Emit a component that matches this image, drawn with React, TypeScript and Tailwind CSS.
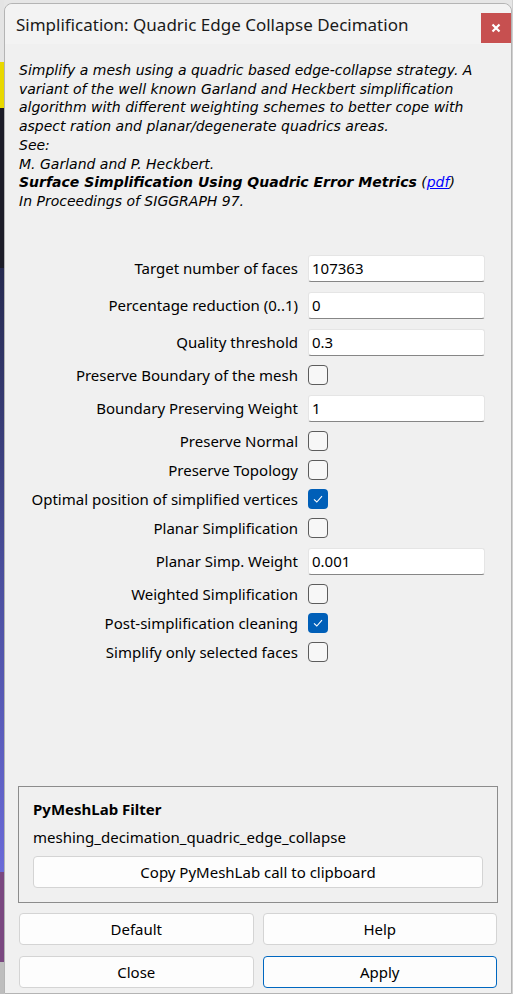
import React from "react";

const ui = { fontFamily: '"Noto Sans", "Open Sans", sans-serif' };
const desc = { fontFamily: '"DejaVu Sans", Verdana, sans-serif' };

function Check({ checked }: { checked?: boolean }) {
  return checked ? (
    <div className="w-[20px] h-[20px] rounded-[4px] bg-[#005fb8] flex items-center justify-center">
      <svg width="12" height="12" viewBox="0 0 12 12">
        <path d="M2 6.3 L4.8 9 L10 3.2" fill="none" stroke="white" strokeWidth="1.1" />
      </svg>
    </div>
  ) : (
    <div className="w-[20px] h-[20px] rounded-[4px] border border-[#5c5c5c] bg-[#f7f7f7]" />
  );
}

type Row = { label: string; value?: string; checked?: boolean; kind: "input" | "check" };

const rows: Row[] = [
  { label: "Target number of faces", value: "107363", kind: "input" },
  { label: "Percentage reduction (0..1)", value: "0", kind: "input" },
  { label: "Quality threshold", value: "0.3", kind: "input" },
  { label: "Preserve Boundary of the mesh", kind: "check" },
  { label: "Boundary Preserving Weight", value: "1", kind: "input" },
  { label: "Preserve Normal", kind: "check" },
  { label: "Preserve Topology", kind: "check" },
  { label: "Optimal position of simplified vertices", kind: "check", checked: true },
  { label: "Planar Simplification", kind: "check" },
  { label: "Planar Simp. Weight", value: "0.001", kind: "input" },
  { label: "Weighted Simplification", kind: "check" },
  { label: "Post-simplification cleaning", kind: "check", checked: true },
  { label: "Simplify only selected faces", kind: "check" },
];

function Btn({ children, primary }: { children: React.ReactNode; primary?: boolean }) {
  return (
    <div
      className={
        "h-[32px] flex-1 flex items-center justify-center rounded-[4px] bg-[#fdfdfd] text-[15px] text-black border " +
        (primary ? "border-[#0067c0]" : "border-[#d4d4d4]")
      }
    >
      {children}
    </div>
  );
}

export default function App() {
  return (
    <div className="w-[513px] h-[994px] flex bg-[#e6e6e6] overflow-hidden" style={ui}>
      <div className="w-[4px] shrink-0 flex flex-col">
        <div className="h-[62px] bg-[#e4e4e4]" />
        <div className="h-[46px] bg-[#e8d800]" />
        <div className="h-[160px] bg-[#1c1c28]" />
        <div className="h-[604px] bg-gradient-to-b from-[#262a50] via-[#4a4e9c] to-[#6a6ad8]" />
        <div className="h-[90px] bg-[#7a4880]" />
        <div className="flex-1 bg-[#bdbdbd]" />
      </div>
      <div className="w-[508px] shrink-0 mt-[3px] rounded-t-[8px] border border-[#b4b4b4] bg-[#f0f0f0] flex flex-col">
        <div className="h-[40px] flex justify-between bg-[#f3f3f3] rounded-t-[8px]">
          <div className="pl-[11px] pt-[9px] text-[17px] text-[#1a1a1a] leading-[24px]">
            Simplification: Quadric Edge Collapse Decimation
          </div>
          <div className="w-[30px] h-[30px] mt-[9px] bg-[#c75050] flex items-center justify-center">
            <svg width="10" height="10" viewBox="0 0 10 10">
              <path d="M1.5 1.5 L8.5 8.5 M8.5 1.5 L1.5 8.5" stroke="white" strokeWidth="2.2" />
            </svg>
          </div>
        </div>
        <div className="pl-[14px] pt-[17px] text-[14px] italic leading-[18.7px] text-black" style={desc}>
          <div>Simplify a mesh using a quadric based edge-collapse strategy. A</div>
          <div>variant of the well known Garland and Heckbert simplification</div>
          <div>algorithm with different weighting schemes to better cope with</div>
          <div>aspect ration and planar/degenerate quadrics areas.</div>
          <div>See:</div>
          <div>M. Garland and P. Heckbert.</div>
          <div>
            <span className="font-bold">Surface Simplification Using Quadric Error Metrics</span> (
            <span className="text-[#0000ff] underline">pdf</span>)
          </div>
          <div>In Proceedings of SIGGRAPH 97.</div>
        </div>
        <div className="mt-[44px] flex flex-col gap-[10px] pr-[26px]">
          {rows.map((r) => (
            <div key={r.label} className={"flex items-center " + (r.kind === "input" ? "h-[27px]" : "h-[19px]")}>
              <div className="w-[293px] text-right text-[15px] text-black leading-[20px]">{r.label}</div>
              <div className="ml-[10px] flex-1 flex">
                {r.kind === "input" ? (
                  <div className="h-[27px] w-full bg-white border border-[#e5e5e5] border-b-[#868686] rounded-[3px] pl-[3px] text-[15px] leading-[25px] text-black">
                    {r.value}
                  </div>
                ) : (
                  <Check checked={r.checked} />
                )}
              </div>
            </div>
          ))}
        </div>
        <div className="flex-1" />
        <div className="mx-[13px] border border-[#8c8c8c] pt-[12px] pb-[14px] px-[14px]">
          <div className="text-[15px] font-bold text-black leading-[20px]">PyMeshLab Filter</div>
          <div className="mt-[8px] text-[15px] text-black leading-[20px]">meshing_decimation_quadric_edge_collapse</div>
          <div className="mt-[9px] h-[32px] rounded-[4px] border border-[#d4d4d4] bg-[#fdfdfd] flex items-center justify-center text-[15px] text-black">
            Copy PyMeshLab call to clipboard
          </div>
        </div>
        <div className="mx-[14px] mt-[10px] flex gap-[9px]">
          <Btn>Default</Btn>
          <Btn>Help</Btn>
        </div>
        <div className="mx-[14px] mt-[11px] mb-[5px] flex gap-[9px]">
          <Btn>Close</Btn>
          <Btn primary>Apply</Btn>
        </div>
      </div>
      <div className="flex-1 bg-[#d0d0d0]" />
    </div>
  );
}
